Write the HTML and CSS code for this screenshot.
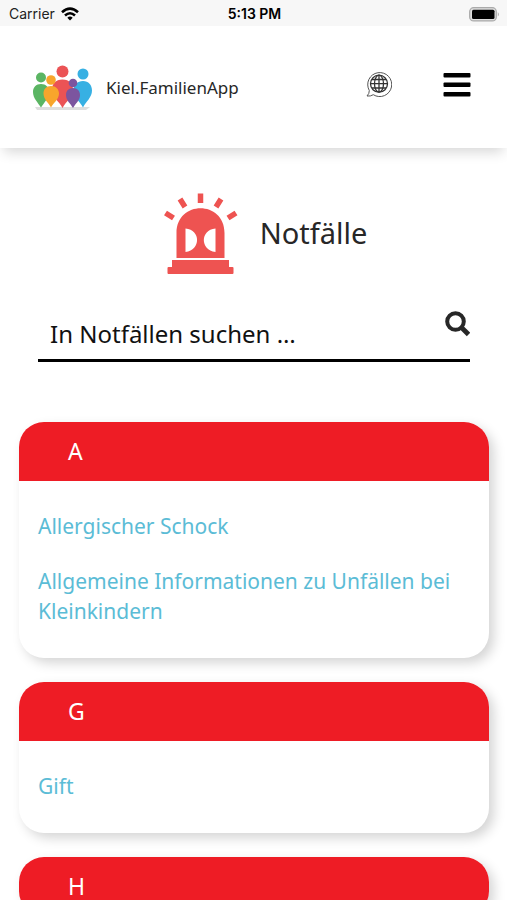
FILE: index.html
```html
<!DOCTYPE html>
<html lang="de">
<head>
<meta charset="utf-8">
<meta name="viewport" content="width=device-width, initial-scale=1">
<title>Kiel.FamilienApp</title>
<link rel="stylesheet" href="styles.css">
</head>
<body>
<div class="status">
  <div class="carrier">
    <span>Carrier</span>
    <svg width="18" height="14" viewBox="0 0 18 14" fill="none" stroke="#000" stroke-width="2.6"><path d="M1 5.2Q9-2 17 5.2M4 8.5Q9 4 14 8.5"/><path d="M6.3 10.8Q9 8.3 11.7 10.8L9 13.6Z" fill="#000" stroke="none"/></svg>
  </div>
  <span class="time">5:13 PM</span>
  <svg class="battery" width="31" height="15" viewBox="0 0 31 15"><rect x=".7" y=".7" width="26.6" height="13.2" rx="4" fill="#ddd" stroke="#aaa" stroke-width="1.3"/><rect x="3" y="2.7" width="22.5" height="9.3" rx="1.5"/><path d="M28.8 5Q31 7.3 28.8 9.6Z" fill="#aaa"/></svg>
</div>
<header class="header">
  <a class="brand" href="#">
    <svg width="60" height="46" viewBox="0 0 60 46">
      <path d="M3 43H58L54 46H5Z" fill="#dedede"/>
      <g transform="translate(.5 1.500)">
      <g fill="#5bb563"><circle cx="8.500" cy="12" r="5"/><path d="M8.500 18.500C3.500 18.500.5 22 .5 26.500C.5 33 5.500 37 8.500 42C11.500 37 16.500 33 16.500 26.500C16.500 22 13.500 18.500 8.500 18.500Z"/></g>
      <g fill="#37b0e3"><circle cx="50.500" cy="8.500" r="5.500"/><path d="M50.500 15.500C45 15.500 41 19.500 41 25C41 32 47.500 36 50.500 42C53.500 36 59.500 32 59.500 25C59.500 19.500 56 15.500 50.500 15.500Z"/></g>
      <g fill="#eb5355"><circle cx="30" cy="6" r="6"/><path d="M30 14C23 14 19.500 18.500 19.500 24.500C19.500 32 27 36 30 42.500C33 36 40.500 32 40.500 24.500C40.500 18.500 37 14 30 14Z"/></g>
      <g fill="#f8a52c"><circle cx="18.500" cy="14.500" r="4.800"/><path d="M18.500 20.500C13.500 20.500 11 24 11 28C11 34 16 37 18.500 42C21 37 26.500 34 26.500 28C26.500 24 23.500 20.500 18.500 20.500Z"/></g>
      <g fill="#7c559f"><circle cx="40.500" cy="17.500" r="4.300"/><path d="M40.500 22.500C36 22.500 33.500 25.500 33.500 29.500C33.500 35 38 38 40.500 42.500C43 38 47.500 35 47.500 29.500C47.500 25.500 45 22.500 40.500 22.500Z"/></g>
      </g>
    </svg>
    <span>Kiel.FamilienApp</span>
  </a>
  <div class="actions">
    <button class="icon-button" type="button" aria-label="Sprache">
      <svg width="26" height="26" viewBox="0 0 26 26" fill="none" stroke="#333" stroke-width="1"><path d="M3.300 18.500A12 12 0 1 1 7.300 22.700Q4.500 24.500 1 24Q3.500 21.500 3.300 18.500Z" stroke="#555"/><g stroke-width="1.300"><circle cx="13" cy="11.700" r="8.500"/><ellipse cx="13" cy="11.700" rx="4.500" ry="8.500"/><path d="M13 3.200V20.200M4.500 11.700H21.500M6 7.500H20M6 16H20"/></g></svg>
    </button>
    <button class="icon-button" type="button" aria-label="Menü">
      <svg width="28" height="26" viewBox="0 0 28 26"><rect x=".5" y="1" width="27" height="4.500" rx="1"/><rect x=".5" y="10.500" width="27" height="4.500" rx="1"/><rect x=".5" y="20" width="27" height="4.500" rx="1"/></svg>
    </button>
  </div>
</header>
<main>
  <div class="hero">
    <svg width="74" height="82" viewBox="0 0 74 82">
      <g stroke="#ee5351" stroke-width="5.500" stroke-linecap="butt"><path d="M36.500.5V10M16 6L21 14M57 6L52 14M1.500 20L9.500 25M72 20L64 25"/></g>
      <path fill="#ee5351" d="M12.500 65V40C12.500 7 60.500 7 60.500 40V65ZM8 67H65V74H68.500Q69.500 74 69.500 75V80Q69.500 81 68.500 81H4.500Q3.500 81 3.500 80V75Q3.500 74 4.500 74H8Z"/>
      <path fill="#fff" d="M21.500 35.500C37 37 37 57 21.500 59ZM51.500 35.500C36 37 36 57 51.500 59Z"/>
    </svg>
    <h1>Notfälle</h1>
  </div>
  <form class="search">
    <input type="search" aria-label="In Notfällen suchen" placeholder="In Notfällen suchen …">
    <button class="icon-button" type="submit" aria-label="Suchen">
      <svg width="26" height="26" viewBox="0 0 26 26" fill="none" stroke="#272727" stroke-width="4"><circle cx="11.500" cy="10.500" r="8.300"/><path d="M17 16L24.500 23.500" stroke-width="4.800"/></svg>
    </button>
  </form>
  <div class="cards">
    <section class="card">
      <h2>A</h2>
      <ul>
        <li><a href="#">Allergischer Schock</a></li>
        <li><a href="#">Allgemeine Informationen zu Unfällen bei Kleinkindern</a></li>
      </ul>
    </section>
    <section class="card">
      <h2>G</h2>
      <ul>
        <li><a href="#">Gift</a></li>
      </ul>
    </section>
    <section class="card">
      <h2>H</h2>
    </section>
  </div>
</main>
</body>
</html>
```
FILE: styles.css
```css
* { box-sizing: border-box; }
body {
  margin: 0;
  height: 100vh;
  overflow: hidden;
  background: #fff;
  color: #272727;
  font-family: "Noto Sans", "Open Sans", sans-serif;
}
svg { display: block; flex: none; }
.status {
  display: grid;
  grid-template-columns: 1fr auto 1fr;
  align-items: center;
  height: 26px;
  padding: 0 7px 0 9px;
  background: #f7f7f7;
  color: #222;
  font: 14px/28px Inter, sans-serif;
}
.carrier { display: flex; align-items: center; gap: 6px; }
.time { font-weight: 600; color: #000; }
.battery { justify-self: end; }
.header {
  display: flex;
  align-items: center;
  justify-content: space-between;
  height: 122px;
  padding: 0 36px 0 32px;
  box-shadow: 0 8px 12px -4px rgba(0, 0, 0, 0.16);
}
.brand {
  display: flex;
  align-items: center;
  gap: 14px;
  color: #272727;
  font-size: 17px;
  text-decoration: none;
}
.actions { display: flex; align-items: center; gap: 51px; padding-bottom: 4px; }
.icon-button { padding: 0; border: 0; background: none; }
.hero {
  display: flex;
  align-items: center;
  justify-content: center;
  gap: 22px;
  padding: 45px 0 32px 24px;
}
h1 { margin: 0; font-size: 29px; font-weight: 400; line-height: 36px; padding-bottom: 2px; }
.search {
  display: flex;
  align-items: flex-start;
  height: 55px;
  margin: 0 37px 0 38px;
  padding-top: 4px;
  border-bottom: 3px solid #000;
}
.search input {
  flex: 1;
  min-width: 0;
  height: 45px;
  padding: 0 12px;
  border: 0;
  background: none;
  color: #111;
  font: inherit;
  font-size: 24px;
  outline: 0;
}
.search input::placeholder { color: #111; opacity: 1; }
.cards {
  display: grid;
  gap: 24px;
  padding: 60px 18px 24px 19px;
}
.card {
  border-radius: 25px;
  background: #fff;
  box-shadow: 5px 5px 12px rgba(0, 0, 0, 0.17);
  overflow: hidden;
}
.card h2 {
  margin: 0;
  padding: 0 49px 1px;
  background: #ee1c25;
  color: #fff;
  font-size: 23px;
  font-weight: 400;
  line-height: 58px;
}
.card ul {
  display: grid;
  gap: 25px;
  margin: 0;
  padding: 30px 19px 32px;
  list-style: none;
}
.card a {
  display: block;
  color: #5bbcd6;
  font-size: 21px;
  line-height: 30px;
  text-decoration: none;
}
```
